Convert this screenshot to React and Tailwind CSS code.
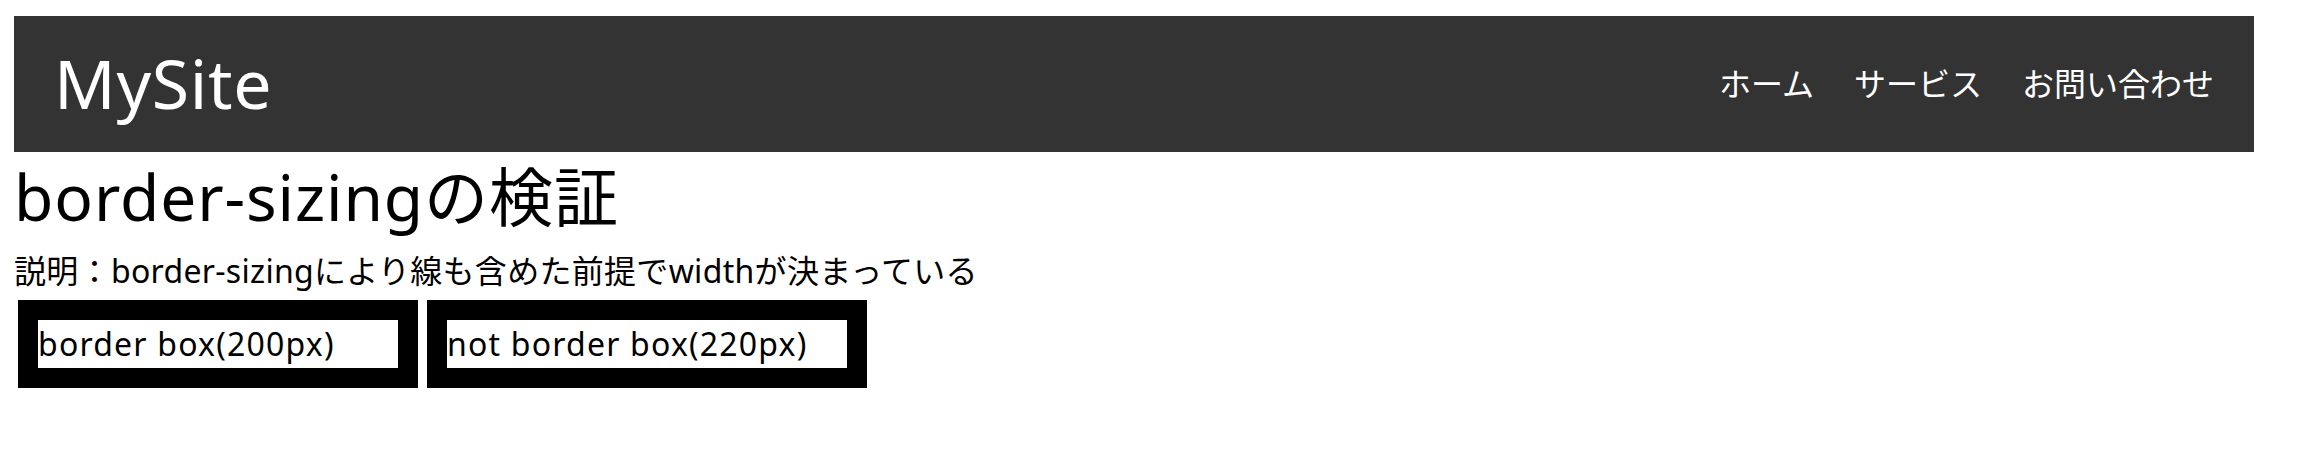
export default function App() {
  const font = { fontFamily: '"Noto Sans", "Noto Sans CJK JP", sans-serif' }
  return (
    <div className="min-h-screen bg-white text-black pt-[16px] pl-[14px]" style={font}>
      <div className="w-[2240px]">
        {/* Header */}
        <header className="h-[136px] bg-[#333333] flex items-center justify-between pl-[40px] pr-[40px]">
          <div className="text-white text-[68px] leading-none tracking-[0.7px] -mt-[3px]">MySite</div>
          <nav className="flex items-center gap-[40px] text-white text-[32px] leading-none">
            <a>ホーム</a>
            <a>サービス</a>
            <a>お問い合わせ</a>
          </nav>
        </header>

        <h1 className="text-[64px] leading-[90px] font-normal tracking-[0.9px]">border-sizingの検証</h1>
        <p className="text-[32px] leading-[58px] tracking-[0.3px]">説明：border-sizingにより線も含めた前提でwidthが決まっている</p>

        {/* Boxes */}
        <div className="flex gap-[9px] ml-[4px]">
          <div className="w-[400px] border-[20px] border-black text-[32px] leading-[48px] tracking-[1.2px] whitespace-nowrap overflow-hidden">
            border box(200px)
          </div>
          <div className="w-[440px] border-[20px] border-black text-[32px] leading-[48px] tracking-[1.2px] whitespace-nowrap overflow-hidden">
            not border box(220px)
          </div>
        </div>
      </div>
    </div>
  )
}
